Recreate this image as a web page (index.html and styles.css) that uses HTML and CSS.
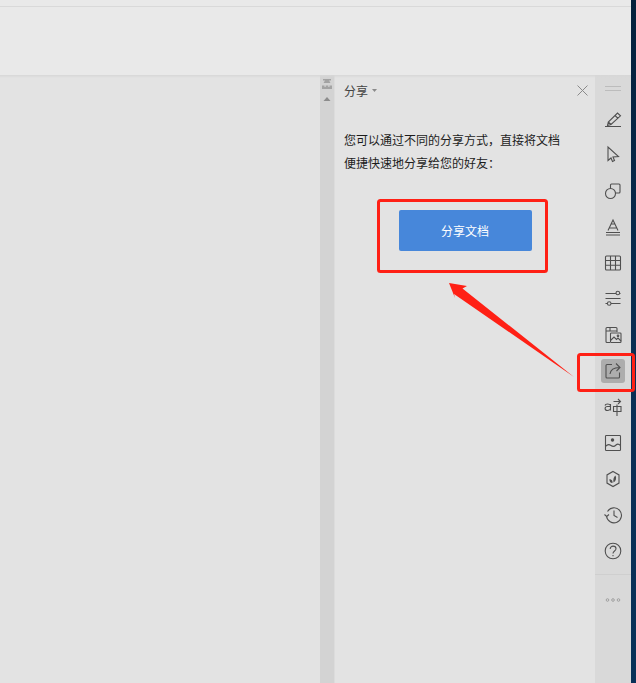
FILE: index.html
```html
<!DOCTYPE html>
<html lang="zh">
<head>
<meta charset="utf-8">
<title>分享</title>
<link rel="stylesheet" href="styles.css">
</head>
<body>
<div class="app">
  <header class="ribbon">
    <div class="tabs"></div>
    <div class="tools"></div>
  </header>
  <div class="work">
    <main class="doc"></main>
    <div class="scroll">
      <svg class="scroll-top" width="14" height="14" viewBox="0 0 14 14"><path fill="#a3a3a3" d="M3 1h8v1.500H9L10.500 5h-7L5 2.500H3zM2 7.500h2.500V9h1.200V7.500h2.600V9h1.200V7.500H12V11H2z"/></svg>
      <svg class="scroll-up" width="14" height="8" viewBox="0 0 14 8"><path fill="#8c8c8c" d="M7 1 10.500 5h-7z"/></svg>
    </div>
    <aside class="panel">
      <div class="panel-head">
        <span class="panel-title">分享</span>
        <svg class="caret" width="5" height="3" viewBox="0 0 5 3"><path fill="#8a8a8a" d="M0 0h5L2.500 3z"/></svg>
        <svg class="close" width="11" height="11" viewBox="0 0 11 11"><path fill="none" stroke="#8a8a8a" d="M.5.500l10 10M10.500.500l-10 10"/></svg>
      </div>
      <p class="panel-text">您可以通过不同的分享方式，直接将文档<br>便捷快速地分享给您的好友：</p>
      <button class="share-btn">分享文档</button>
    </aside>
    <nav class="rail">
      <div class="grip"></div>
      <div class="rail-icons">
        <span class="ico"><svg viewBox="0 0 20 20"><path d="M2 17.500h16M4.500 16.500l.8-3.500L14.500 4l3 2.800L8 15.500zM5.300 13l2.700 2.500M12 6.500l3 2.800"/></svg></span>
        <span class="ico"><svg viewBox="0 0 20 20"><path d="M5 2v13.500l3-2.500 1.500 3.500 2-1L10 12l5.500-.5z"/></svg></span>
        <span class="ico"><svg viewBox="0 0 20 20"><path d="M7.500 7.500V4a1 1 0 0 1 1-1h7.500a1 1 0 0 1 1 1V11a1 1 0 0 1-1 1h-4"/><circle cx="7.500" cy="12.500" r="5"/></svg></span>
        <span class="ico"><svg viewBox="0 0 20 20"><path d="M5 13.500 10 3l5 10.500M6.500 11h7M8.500 7h3M3 15.500h14M3 18h14"/></svg></span>
        <span class="ico"><svg viewBox="0 0 20 20"><rect x="2.500" y="3" width="15" height="14" rx="1"/><path d="M2.500 7.500h15M2.500 12.200h15M7.500 3v14M12.500 3v14"/></svg></span>
        <span class="ico"><svg viewBox="0 0 20 20"><path d="M2.500 4.500H13M16.500 4.500h1M2.500 9.500h15M2.500 14.500h2M8 14.500h9.500"/><circle cx="14.800" cy="4" r="1.800"/><circle cx="6.200" cy="14.500" r="1.800"/></svg></span>
        <span class="ico"><svg viewBox="0 0 20 20"><path d="M7 17.500H4a1 1 0 0 1-1-1V3.500a1 1 0 0 1 1-1h9a1 1 0 0 1 1 1V7M3 6h11M7 2.500V6"/><rect x="7.500" y="8" width="10.500" height="9.500" rx=".8"/><path d="M7.500 15.500l3.500-3.500 2.500 2.500 1.500-1.500 3 3"/><circle cx="15" cy="10.800" r=".8"/></svg></span>
        <span class="ico ico-on"><svg viewBox="0 0 20 20"><path d="M9 3.500H4a1 1 0 0 0-1 1v11.500a1 1 0 0 0 1 1h11.500a1 1 0 0 0 1-1v-4.500M7 13c.5-4 3-6.500 9.500-6.500M13 2.500l4 4-3.500 3.500"/></svg></span>
        <span class="ico"><svg viewBox="0 0 20 20"><path d="M7.500 7V13.500M7.500 8.500C6.500 6.500 2.500 6.500 2 8.500M7.500 9.500H4.500C1.300 9.500 1.300 13.500 4.500 13.500c1.500 0 3-1 3-2M10.500 4.500h7M15 2l2.500 2.500L15 7M10.500 9.500h7.500v5h-7.500zM14 7.500V19"/></svg></span>
        <span class="ico"><svg viewBox="0 0 20 20"><rect x="2.500" y="2.500" width="15" height="15" rx=".8"/><path d="M2.500 13.500c2-2.500 3.500-2.500 5.500-1s3.500 1 5-.5 2.500-1.500 4.500.5"/><circle cx="9.500" cy="7" r="1.200" fill="#4a4a4a"/></svg></span>
        <span class="ico"><svg viewBox="0 0 20 20"><path d="M10 2.500l6 3.400v8.200l-6 3.400-6-3.400V5.900z"/><path class="fill" d="M9.500 14c-2.500 0-3.300-2-3-4 2 .2 3.500 1.800 3 4zM10.500 13.500c-.5-3 0-5.500 2-7 1.300 2.500.5 5.500-2 7z"/></svg></span>
        <span class="ico"><svg viewBox="0 0 20 20"><path d="M4.500 6.500A7.500 7.500 0 1 1 3.500 11M1.500 9.500l2.200 2 2.300-2M11 5.500V10.500l3.500 2"/></svg></span>
        <span class="ico"><svg viewBox="0 0 20 20"><circle cx="10" cy="10" r="7.800"/><path d="M7.200 8c0-4 5.800-3.500 5.800-.3 0 2.300-3 2.300-3 4.800M10 14v1.200"/></svg></span>
      </div>
      <div class="rail-foot">
        <svg width="16" height="4" viewBox="0 0 16 4"><g fill="none" stroke="#a0a0a0"><circle cx="2.500" cy="2" r="1.300"/><circle cx="8" cy="2" r="1.300"/><circle cx="13.500" cy="2" r="1.300"/></g></svg>
      </div>
    </nav>
  </div>
</div>
<svg class="notes" width="636" height="683" viewBox="0 0 636 683">
  <g fill="none" stroke="#ff2015" stroke-width="3">
    <rect x="378.500" y="200.500" width="168" height="71" rx="2"/>
    <rect x="578.500" y="354.500" width="55" height="36" rx="2"/>
  </g>
  <path fill="#ff2015" d="M449 283l18 3-4.500 2.500L574 377 454 294l1 4z"/>
</svg>
</body>
</html>
```

FILE: styles.css
```css
* {
  box-sizing: border-box;
}

html,
body {
  margin: 0;
  height: 100%;
}

body {
  position: relative;
  overflow: hidden;
  background: linear-gradient(180deg, #04203c 0%, #0b2f55 55%, #083058 100%);
  font-family: "Noto Sans CJK SC", "Liberation Sans", sans-serif;
}

.app {
  width: 631px;
  height: 683px;
  display: flex;
  flex-direction: column;
}

.ribbon {
  flex: none;
  height: 75px;
  background: #e9e9e9;
}

.tabs {
  height: 7px;
  border-bottom: 1px solid #d9d9d9;
}

.tools {
  height: 68px;
}

.work {
  flex: 1;
  display: flex;
  min-height: 0;
  background: #e3e3e3;
  position: relative;
}

.work::before {
  content: "";
  position: absolute;
  left: 0;
  right: 0;
  top: 0;
  height: 3px;
  background: linear-gradient(180deg, #d7d7d7, #e3e3e300);
}

.doc {
  flex: 1;
}

.scroll {
  flex: none;
  width: 15px;
  display: flex;
  flex-direction: column;
  align-items: center;
  background: #d3d3d3;
  border-right: 1px solid #dcdcdc;
}

.scroll-top {
  margin-top: 3px;
  margin-bottom: 4px;
}

.panel {
  flex: none;
  width: 260px;
  padding: 0 9px;
  color: #1c1c1c;
}

.panel-head {
  height: 30px;
  display: flex;
  align-items: center;
  font-size: 12px;
  color: #444;
}

.caret {
  margin-left: 4px;
}

.close {
  margin-left: auto;
  margin-right: -2px;
}

.panel-text {
  margin: 23px 0 0;
  font-size: 12px;
  line-height: 23px;
}

.share-btn {
  display: block;
  width: 133px;
  height: 41px;
  margin: 36px 0 0 55px;
  padding: 0 1px 0 0;
  border: 0;
  border-radius: 2px;
  background: #4787da;
  color: #fff;
  font: inherit;
  font-size: 12px;
}

.rail {
  flex: none;
  width: 36px;
  display: flex;
  flex-direction: column;
  align-items: center;
  background: #d9d9d9;
}

.grip {
  width: 16px;
  height: 5px;
  margin-top: 11px;
  border-top: 1px solid #bcbcbc;
  border-bottom: 1px solid #bcbcbc;
}

.rail-icons {
  margin-top: 16px;
  display: flex;
  flex-direction: column;
  gap: 12px;
}

.ico {
  width: 24px;
  height: 24px;
  display: flex;
  align-items: center;
  justify-content: center;
  border-radius: 3px;
}

.ico svg {
  width: 20px;
  height: 20px;
  fill: none;
  stroke: #505050;
  stroke-width: 1.100;
}

.ico svg .fill {
  fill: #505050;
  stroke: none;
}

.ico-on {
  background: #adadad;
}

.rail-foot {
  width: 100%;
  margin-top: 11px;
  padding-top: 23px;
  border-top: 1px solid #cfcfcf;
  display: flex;
  justify-content: center;
}

.rail-foot svg {
  display: block;
}

.notes {
  position: absolute;
  left: 0;
  top: 0;
  pointer-events: none;
}
```
